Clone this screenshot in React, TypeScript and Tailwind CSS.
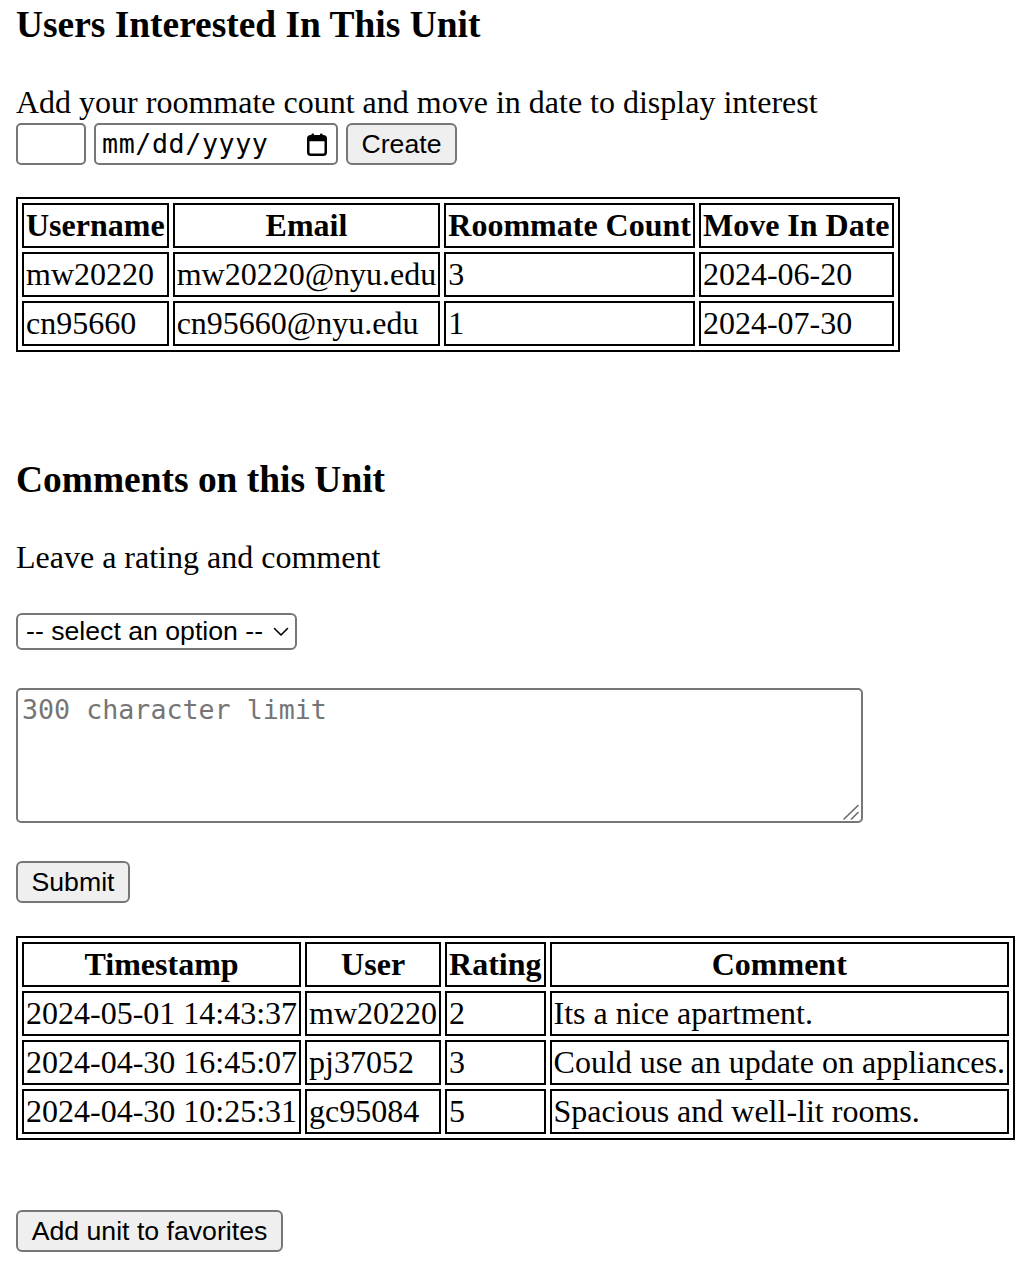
import React from 'react'

const interested = [
  { username: 'mw20220', email: 'mw20220@nyu.edu', count: '3', moveIn: '2024-06-20' },
  { username: 'cn95660', email: 'cn95660@nyu.edu', count: '1', moveIn: '2024-07-30' },
]

const comments = [
  { ts: '2024-05-01 14:43:37', user: 'mw20220', rating: '2', text: 'Its a nice apartment.' },
  { ts: '2024-04-30 16:45:07', user: 'pj37052', rating: '3', text: 'Could use an update on appliances.' },
  { ts: '2024-04-30 10:25:31', user: 'gc95084', rating: '5', text: 'Spacious and well-lit rooms.' },
]

const th = "border-2 border-black p-[2px] font-bold text-center leading-[37px] whitespace-nowrap"
const td = "border-2 border-black p-[2px] text-left leading-[37px] whitespace-nowrap"
const btn = "h-[42px] bg-[#efefef] border-2 border-[#767676] rounded-[6px] text-[26.67px] text-black font-['Liberation_Sans',Arial,sans-serif] leading-none"

function CalendarIcon(){
  return (
    <svg width="20" height="23" viewBox="0 0 20 23" fill="none">
      <rect x="1.25" y="3.25" width="17.5" height="18.5" rx="2.5" stroke="black" strokeWidth="2.5" />
      <rect x="1.25" y="3.25" width="17.5" height="5" fill="black" />
      <rect x="4.5" y="0.5" width="2.5" height="4" rx="1" fill="black" />
      <rect x="13" y="0.5" width="2.5" height="4" rx="1" fill="black" />
    </svg>
  )
}

export default function App(){
  const [count, setCount] = React.useState('')
  const [rating, setRating] = React.useState('')
  const [comment, setComment] = React.useState('')

  return (
    <div className="min-h-[1262px] bg-white px-[16px] pt-[3px] text-black text-[32px] font-['Liberation_Serif','Times_New_Roman',serif]">
      <h3 className="text-[37.44px] font-bold leading-[43px]">Users Interested In This Unit</h3>

      <div className="mt-[37.5px] leading-[37px]">Add your roommate count and move in date to display interest</div>
      <div className="mt-[2.5px] flex items-center gap-[8px]">
        <input
          value={count}
          onChange={e=>setCount(e.target.value)}
          className="w-[70px] h-[42px] border-2 border-[#767676] rounded-[5px] px-[4px] text-[26.67px] outline-none"
        />
        <div className="w-[244px] h-[42px] border-2 border-[#767676] rounded-[5px] flex items-center justify-between pl-[6px] pr-[9px]">
          <span className="text-[26.67px] tracking-[0.6px] font-['DejaVu_Sans_Mono',monospace] leading-none">mm/dd/yyyy</span>
          <CalendarIcon />
        </div>
        <button className={btn + " w-[111px]"}>Create</button>
      </div>

      <table className="mt-[32px] border-2 border-black border-separate border-spacing-[4px]">
        <thead>
          <tr>
            <th className={th}>Username</th>
            <th className={th}>Email</th>
            <th className={th}>Roommate Count</th>
            <th className={th}>Move In Date</th>
          </tr>
        </thead>
        <tbody>
          {interested.map(r => (
            <tr key={r.username}>
              <td className={td}>{r.username}</td>
              <td className={td}>{r.email}</td>
              <td className={td}>{r.count}</td>
              <td className={td}>{r.moveIn}</td>
            </tr>
          ))}
        </tbody>
      </table>

      <h3 className="mt-[106px] text-[37.44px] font-bold leading-[43px]">Comments on this Unit</h3>
      <p className="mt-[37.5px] leading-[37px]">Leave a rating and comment</p>

      <div className="mt-[37.5px] relative w-[281px] h-[37px]">
        <select
          value={rating}
          onChange={e=>setRating(e.target.value)}
          className="block appearance-none w-full h-full border-2 border-[#767676] rounded-[6px] bg-white pl-[8px] text-[26.67px] text-black font-['Liberation_Sans',Arial,sans-serif] leading-none outline-none"
        >
          <option value="">-- select an option --</option>
          <option value="1">1</option>
          <option value="2">2</option>
          <option value="3">3</option>
          <option value="4">4</option>
          <option value="5">5</option>
        </select>
        <svg className="absolute left-[257px] top-[14px] pointer-events-none" width="16" height="10" viewBox="0 0 16 10" fill="none">
          <path d="M1.5 1.5 L8 8 L14.5 1.5" stroke="black" strokeWidth="1.6" strokeLinecap="round" strokeLinejoin="round" />
        </svg>
      </div>

      <div className="mt-[38px] relative w-[847px] h-[135px]">
        <textarea
          value={comment}
          onChange={e=>setComment(e.target.value)}
          placeholder="300 character limit"
          className="block w-full h-full resize-none border-2 border-[#767676] rounded-[5px] px-[4px] py-[4px] text-[26.67px] leading-[31px] font-['DejaVu_Sans_Mono',monospace] placeholder:text-[#757575] outline-none"
        />
        <svg className="absolute right-[3px] bottom-[3px] pointer-events-none" width="17" height="16" viewBox="0 0 17 16" fill="none">
          <path d="M1 15 L15 1.5" stroke="#6b6b6b" strokeWidth="1.6" strokeLinecap="round" />
          <path d="M8.5 15 L15 8.5" stroke="#6b6b6b" strokeWidth="1.6" strokeLinecap="round" />
        </svg>
      </div>

      <button className={btn + " mt-[38px] block w-[114px]"}>Submit</button>

      <table className="mt-[33px] border-2 border-black border-separate border-spacing-[4px]">
        <thead>
          <tr>
            <th className={th}>Timestamp</th>
            <th className={th}>User</th>
            <th className={th}>Rating</th>
            <th className={th}>Comment</th>
          </tr>
        </thead>
        <tbody>
          {comments.map(c => (
            <tr key={c.ts}>
              <td className={td}>{c.ts}</td>
              <td className={td}>{c.user}</td>
              <td className={td}>{c.rating}</td>
              <td className={td}>{c.text}</td>
            </tr>
          ))}
        </tbody>
      </table>

      <button className={btn + " mt-[70px] block w-[267px]"}>Add unit to favorites</button>
    </div>
  )
}
